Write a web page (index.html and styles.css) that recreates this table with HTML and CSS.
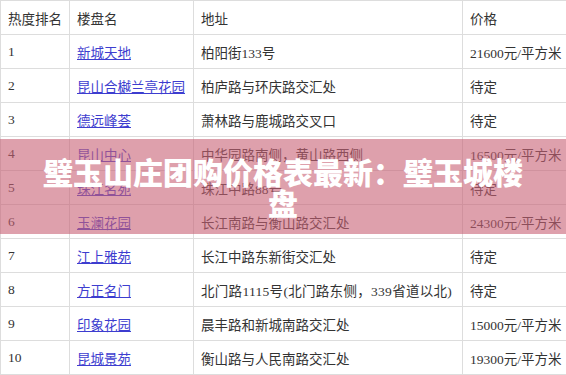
FILE: index.html
```html
<!DOCTYPE html>
<html lang="zh-CN">
<head>
<meta charset="utf-8">
<title>璧玉山庄团购价格表最新</title>
<link rel="stylesheet" href="styles.css">
</head>
<body>
<div class="page">
  <table class="price-table">
    <colgroup>
      <col class="c-rank">
      <col class="c-name">
      <col class="c-addr">
      <col class="c-price">
    </colgroup>
    <thead>
      <tr><th>热度排名</th><th>楼盘名</th><th>地址</th><th>价格</th></tr>
    </thead>
    <tbody>
      <tr><td>1</td><td><a href="#">新城天地</a></td><td>柏阳街133号</td><td>21600元/平方米</td></tr>
      <tr><td>2</td><td><a href="#">昆山合樾兰亭花园</a></td><td>柏庐路与环庆路交汇处</td><td>待定</td></tr>
      <tr><td>3</td><td><a href="#">德远峰荟</a></td><td>萧林路与鹿城路交叉口</td><td>待定</td></tr>
      <tr><td>4</td><td><a href="#">昆山中心</a></td><td>中华园路南侧，黄山路西侧</td><td>16500元/平方米</td></tr>
      <tr><td>5</td><td><a href="#">珠江名苑</a></td><td>珠江中路88号</td><td>待定</td></tr>
      <tr><td>6</td><td><a href="#">玉澜花园</a></td><td>长江南路与衡山路交汇处</td><td>24300元/平方米</td></tr>
      <tr><td>7</td><td><a href="#">江上雅苑</a></td><td>长江中路东新街交汇处</td><td>待定</td></tr>
      <tr><td>8</td><td><a href="#">方正名门</a></td><td class="wide">北门路1115号(北门路东侧，339省道以北)</td><td>待定</td></tr>
      <tr><td>9</td><td><a href="#">印象花园</a></td><td>晨丰路和新城南路交汇处</td><td>15000元/平方米</td></tr>
      <tr><td>10</td><td><a href="#">昆城景苑</a></td><td>衡山路与人民南路交汇处</td><td>19300元/平方米</td></tr>
    </tbody>
  </table>
  <div class="banner">
    <h1 class="banner-title">璧玉山庄团购价格表最新：璧玉城楼盘</h1>
  </div>
</div>
</body>
</html>
```

FILE: styles.css
```css
html, body {
  margin: 0;
  padding: 0;
  background: #ffffff;
}

.page {
  position: relative;
  width: 566px;
  height: 375px;
  overflow: hidden;
}

.price-table {
  width: 566px;
  border-collapse: collapse;
  table-layout: fixed;
  font-family: "Liberation Serif", "Noto Sans CJK SC", serif;
  font-size: 13.5px;
  color: #333333;
}

.c-rank { width: 69px; }
.c-name { width: 124px; }
.c-addr { width: 269px; }
.c-price { width: 104px; }

.price-table th,
.price-table td {
  height: 33px;
  padding: 0 0 0 7px;
  border: 1px solid #dddddd;
  text-align: left;
  vertical-align: middle;
  font-weight: normal;
  white-space: nowrap;
  overflow: hidden;
}

.price-table a {
  color: #3d3dcf;
  text-decoration: underline;
}

.price-table .wide {
  letter-spacing: 0.3px;
}

.banner {
  position: absolute;
  left: 0;
  top: 139px;
  width: 566px;
  height: 95px;
  box-sizing: border-box;
  padding: 0 40px;
  background: rgba(200, 96, 116, 0.6);
  display: flex;
  align-items: center;
  justify-content: center;
}

.banner-title {
  margin: 0;
  font-family: "Noto Sans CJK SC", "Noto Sans", sans-serif;
  font-weight: 900;
  font-size: 30px;
  line-height: 31px;
  color: #ffffff;
  text-align: center;
}
```
